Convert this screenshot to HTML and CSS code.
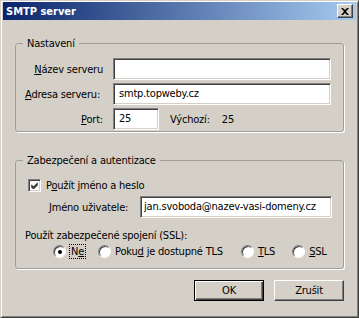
FILE: index.html
```html
<!DOCTYPE html>
<html lang="cs">
<head>
  <meta charset="UTF-8">
  <title>SMTP server</title>
  <link rel="stylesheet" href="styles.css">
</head>
<body>

<div class="window">
  <div class="titlebar">
    <span class="title">SMTP server</span>
    <span class="close"><svg width="8" height="7" viewBox="0 0 8 7"><path d="M0 0 L2 0 L4 2 L6 0 L8 0 L5 3.5 L8 7 L6 7 L4 5 L2 7 L0 7 L3 3.5 Z" fill="#000"/></svg></span>
  </div>

  <div class="content">
    <fieldset class="group first">
      <legend>Nastavení</legend>
      <div class="form">
        <label class="lbl right"><u>N</u>ázev serveru</label>
        <div class="field wide"></div>

        <label class="lbl"><u>A</u>dresa serveru:</label>
        <div class="field wide">smtp.topweby.cz</div>

        <label class="lbl right"><u>P</u>ort:</label>
        <div class="port-row">
          <div class="field port">25</div>
          <span class="default-lbl">Výchozí:</span>
          <span>25</span>
        </div>
      </div>
    </fieldset>

    <fieldset class="group second">
      <legend>Zabezpečení a autentizace</legend>
      <div class="check-row">
        <span class="checkbox"><svg width="7" height="7" viewBox="0 0 7 7"><path d="M0 2.5 L2.5 5 L7 0.5 M0 3.5 L2.5 6 L7 1.5 M0 4.5 L2.5 7 L7 2.5" stroke="#000" stroke-width="1" fill="none"/></svg></span>
        <span>P<u>o</u>užít jméno a heslo</span>
      </div>
      <div class="user-row">
        <label class="lbl"><u>J</u>méno uživatele:</label>
        <div class="field user">jan.svoboda@nazev-vasi-domeny.cz</div>
      </div>
      <div class="ssl-lbl">Použít zabezpečené spojení (SSL):</div>
      <div class="radios">
        <span class="radio-item ne"><span class="radio on"></span><span class="focus">N<u>e</u></span></span>
        <span class="radio-item tls-opt"><span class="radio"></span><span>Poku<u>d</u> je dostupné TLS</span></span>
        <span class="radio-item tls"><span class="radio"></span><span><u>T</u>LS</span></span>
        <span class="radio-item"><span class="radio"></span><span><u>S</u>SL</span></span>
      </div>
    </fieldset>

    <div class="buttons">
      <button class="btn default">OK</button>
      <button class="btn">Zrušit</button>
    </div>
  </div>
</div>

</body>
</html>
```

FILE: styles.css
```css
body {
  margin: 0;
  padding: 0;
  background: #d4d0c8;
  font-family: 'DejaVu Sans Condensed', 'DejaVu Sans', sans-serif;
  font-size: 11px;
  letter-spacing: -0.2px;
  color: #000;
  white-space: nowrap;
}

.window {
  width: 359px;
  height: 318px;
  box-sizing: border-box;
  background: #d4d0c8;
  border: 1px solid;
  border-color: #d4d0c8 #404040 #404040 #d4d0c8;
  box-shadow: inset 1px 1px #fff, inset -1px -1px #808080;
  padding: 1px 2px 2px 1px;
  overflow: hidden;
}

.titlebar {
  height: 18px;
  margin-left: 1px;
  background: linear-gradient(to right, #0a246a, #a6caf0);
  display: flex;
  align-items: center;
  justify-content: space-between;
  padding: 0 3px 0 3px;
}

.title {
  color: #fff;
  font-weight: bold;
  font-size: 11px;
  letter-spacing: 0;
}

.close {
  width: 16px;
  height: 14px;
  box-sizing: border-box;
  background: #d4d0c8;
  border: 1px solid;
  border-color: #fff #404040 #404040 #fff;
  box-shadow: inset -1px -1px #808080;
  display: flex;
  align-items: center;
  justify-content: center;
}

.content {
  padding: 17px 12px 0 13px;
}

.group {
  margin: 0;
  padding: 0 10px 0 9px;
  border: 1px solid #a09e98;
  border-radius: 3px;
  box-shadow: 1px 1px #fff;
}

.group legend {
  padding: 0 4px;
  margin-left: -2px;
}

.form {
  display: grid;
  grid-template-columns: 78px 218px;
  column-gap: 10px;
  row-gap: 3px;
  align-items: center;
  padding: 8px 0 1px 0;
}

.lbl.right {
  text-align: right;
}

.field {
  height: 22px;
  box-sizing: border-box;
  background: #fff;
  border: 1px solid;
  border-color: #808080 #fff #fff #808080;
  box-shadow: inset 1px 1px #404040, inset -1px -1px #d4d0c8;
  padding: 0 5px;
  line-height: 20px;
  overflow: hidden;
}

.port-row {
  display: flex;
  align-items: center;
}

.field.port {
  width: 46px;
}

.default-lbl {
  margin: 0 12px 0 11px;
}

.group.second {
  margin-top: 22px;
  padding-bottom: 10px;
}

.check-row {
  display: flex;
  align-items: center;
  gap: 5px;
  margin: 12px 0 0 3px;
}

.checkbox {
  width: 13px;
  height: 13px;
  box-sizing: border-box;
  background: #fff;
  border: 1px solid;
  border-color: #808080 #fff #fff #808080;
  box-shadow: inset 1px 1px #404040, inset -1px -1px #d4d0c8;
  display: flex;
  align-items: center;
  justify-content: center;
}

.user-row {
  display: flex;
  align-items: center;
  margin: 4px 0 0 24px;
}

.user-row .lbl {
  width: 91px;
}

.field.user {
  width: 192px;
  padding: 0 3px;
}

.ssl-lbl {
  margin-top: 11px;
}

.radios {
  display: flex;
  align-items: center;
  margin: 3px 0 0 28px;
}

.radio-item {
  display: flex;
  align-items: center;
  gap: 4px;
}

.radio-item.ne {
  margin-right: 13px;
}

.radio-item.tls-opt {
  margin-right: 18px;
}

.radio-item.tls {
  margin-right: 17px;
}

.radio {
  width: 13px;
  height: 13px;
  box-sizing: border-box;
  border-radius: 50%;
  background: #fff;
  border: 1px solid;
  border-color: #808080 #fff #fff #808080;
  box-shadow: inset 1px 1px #404040;
  position: relative;
}

.radio.on::after {
  content: '';
  position: absolute;
  left: 3.5px;
  top: 3.5px;
  width: 4px;
  height: 4px;
  border-radius: 50%;
  background: #000;
}

.focus {
  outline: 1px dotted #000;
  padding: 0 1px;
}

.buttons {
  display: flex;
  justify-content: flex-end;
  gap: 10px;
  margin-top: 11px;
}

.btn {
  width: 70px;
  height: 21px;
  box-sizing: border-box;
  font-family: inherit;
  font-size: 11px;
  letter-spacing: inherit;
  background: #d4d0c8;
  border: 1px solid;
  border-color: #fff #404040 #404040 #fff;
  box-shadow: inset -1px -1px #808080;
  padding: 0;
}

.btn.default {
  border-color: #000;
  box-shadow: inset 1px 1px #fff, inset -1px -1px #404040, inset -2px -2px #808080;
}
```
